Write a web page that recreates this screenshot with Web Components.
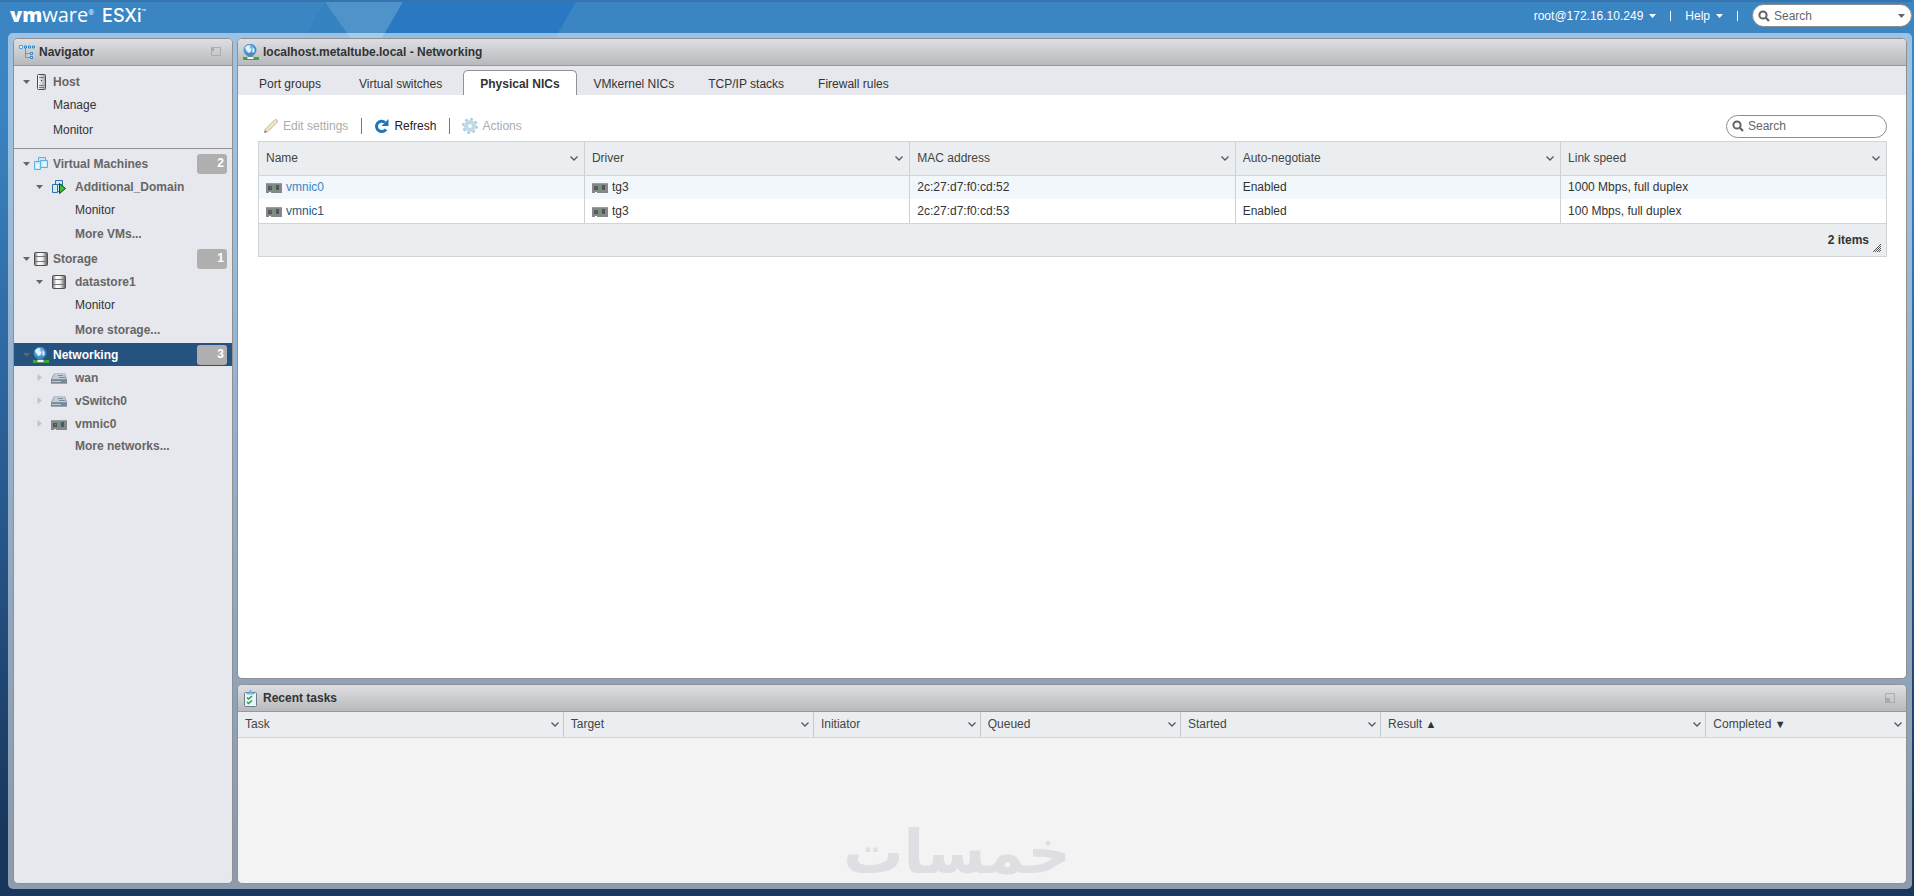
<!DOCTYPE html>
<html lang="en">
<head>
<meta charset="utf-8">
<title>localhost.metaltube.local - VMware ESXi</title>
<style>
  html, body { height: 100%; }
  body { margin: 0; font: 12px/16px "Liberation Sans", Arial, sans-serif; color: #333; }
</style>
</head>
<body>
<esx-app></esx-app>

<script>
const ICONS = {
  tree: `<svg width="16" height="16"><path d="M6.500 4v9.500h5M6.500 9.500h5" fill="none" stroke="#8a8f96"/><g fill="#eaf5fd" stroke="#2e84c8"><path d="M.5 1.500h3v3h-3z" stroke="#4aa5dc"/><path d="M5.500 2h2v2h-2zM9.500 2h2v2h-2zM13.500 2h2v2h-2zM11.500 8.500h2v2h-2zM11.500 12.500h2v2h-2z"/></g></svg>`,
  host: `<svg width="16" height="16"><defs><linearGradient id="a"><stop stop-color="#fff"/><stop offset="1" stop-color="#a5a5a8"/></linearGradient></defs><rect x="4.500" y=".5" width="8" height="15" rx="1" fill="url(#a)" stroke="#4a4a4c"/><path d="M6 3.500h5M6 11.500h5M6 13.500h5" stroke="#777"/><path d="M8 6h1v1H8z" fill="#333"/></svg>`,
  vms: `<svg width="16" height="16"><g fill="#c9e9fb" stroke="#5fb0e2"><path d="M5.500 1.500h7v7h-7z"/><path d="M1.500 5.500h6v8h-6z"/><path d="M7.500 4.500h7v7h-7z"/></g><path d="M3 8h3v4H3zM10 6h3v4h-3z" fill="#e9f7ff"/></svg>`,
  vmOn: `<svg width="16" height="16"><g fill="#d5e9f5" stroke="#2b72a8"><path d="M4.500 1.500h7v7h-7z"/><path d="M1.500 5.500h5v8h-5z"/><path d="M6.500 5.500h4v7h-4z"/></g><path d="M8.500 4.500l6 5-6 5z" fill="#3bc22f" stroke="#17431a"/></svg>`,
  disk: `<svg width="16" height="16"><defs><linearGradient id="a"><stop stop-color="#6d6d70"/><stop offset=".3" stop-color="#fff"/><stop offset=".6" stop-color="#eee"/><stop offset="1" stop-color="#555"/></linearGradient></defs><rect x="1.500" y="1.500" width="13" height="13" rx="1" fill="url(#a)" stroke="#505054"/><path d="M2 5.500h12M2 10.500h12" stroke="#77777b"/></svg>`,
  net: `<svg width="16" height="16"><defs><radialGradient id="a" cx=".4" cy=".35"><stop stop-color="#a9d8f6"/><stop offset="1" stop-color="#3b8bd0"/></radialGradient></defs><circle cx="7" cy="6" r="6" fill="url(#a)" stroke="#3f86c4" stroke-width=".8"/><path d="M2 4c1-2 3-3 5-2.500L6.500 4l2 1-1 3-2 1-1.500-2zM9.500 3l2 2v3l-2 1V6z" fill="#e2f4fd"/><path d="M0 13h16v3H0z" fill="#30b32c"/><path d="M4 13.500l1-1h5l1 1v2H4z" fill="#f2f2f2" stroke="#555" stroke-width=".6"/></svg>`,
  sw: `<svg width="16" height="16"><path d="M3 3.500h11L16 9v4.500H0V9z" fill="#8d9cab"/><path d="M3.500 4h10L15 9H1z" fill="#c0ccd8"/><path d="M0 9.500h16v4H0z" fill="#7b8896"/><path d="M7 5.500h5M8 7.500h6" stroke="#7b8c9d"/><path d="M1 11.500h9" stroke="#b9c7d3"/></svg>`,
  nic: `<svg width="16" height="16"><path d="M0 4h16v10H5v-1H3v1H0z" fill="#85878a"/><path d="M0 4h16v1H0z" fill="#9b9da0"/><path d="M2 7h4v4H2zM10 6h3v5h-3z" fill="#53575c"/><path d="M7 6h1v1H7zM8 9h1v1H8zM7 11h1v1H7zM14 6h1v1h-1zM14 10h1v1h-1zM4 8h1v1H4z" fill="#37c237"/><path d="M11 7h1v3h-1z" fill="#3b4f90"/></svg>`,
  tasks: `<svg width="16" height="17"><rect x="1.500" y="2.500" width="12" height="14" rx="1" fill="#e4f5fb" stroke="#6c7d90"/><path d="M4 4V2.500h2.500L7.500 0l1 2.500H11V4z" fill="#8fc4ea" stroke="#4d94cf" stroke-width=".6"/><path d="M4 7.500l1.500 1.500L9 6M4 12l1.500 1.500L9 10.500" fill="none" stroke="#2ea02e" stroke-width="1.500"/></svg>`,
  pencil: `<svg width="16" height="16"><path d="M1.500 14.500l1-3.500L12 1.500l2 .5.500 2L5 13.500z" fill="#f1e2c0" stroke="#c5baa4"/><path d="M1 15l1-3 2 2z" fill="#8c8c8c"/></svg>`,
  refresh: `<svg width="16" height="16"><path d="M12 11.300A5.200 5.200 0 1 1 11 4.300" fill="none" stroke="#2076bd" stroke-width="3"/><path d="M14.500 1v7H7.500z" fill="#2076bd"/></svg>`,
  gear: `<svg width="16" height="16"><circle cx="8" cy="8" r="6.800" fill="none" stroke="#a9c8d9" stroke-width="2.200" stroke-dasharray="2.700 2.640"/><circle cx="8" cy="8" r="4.300" fill="#fff" stroke="#bcdcec" stroke-width="3.600"/><circle cx="8" cy="8" r="2.500" fill="none" stroke="#c9cdd2"/></svg>`,
  search: `<svg width="12" height="12"><circle cx="5" cy="5" r="3.600" fill="none" stroke="#616469" stroke-width="2"/><path d="M7.800 7.800l3.200 3.200" stroke="#616469" stroke-width="2.200"/></svg>`,
  down: `<svg width="7" height="4"><path d="M0 0h7L3.500 4z" fill="currentColor"/></svg>`,
  right: `<svg width="7" height="7"><path d="M1.500 0v7L6 3.500z" fill="#c3c4c8"/></svg>`,
  chevron: `<svg width="8" height="5"><path d="M.5.5L4 4 7.500.5" fill="none" stroke="#55585c" stroke-width="1.300"/></svg>`,
  dockTop: `<svg width="10" height="10"><path d="M.5.500h9v8h-9z" fill="none" stroke="#aaabad"/><path d="M1 1h2v3H1z" fill="#aaabad"/></svg>`,
  dockBottom: `<svg width="10" height="10"><path d="M.5.500h9v9h-9z" fill="none" stroke="#aaabad"/><path d="M1 5h4v4H1z" fill="#aaabad"/></svg>`,
  grip: `<svg width="8" height="8"><path d="M0 8L8 0M2 8l6-6M4 8l4-4M6 8l2-2" stroke="#444" stroke-width=".9"/></svg>`
};

function define(name, css, html, setup) {
  const t = document.createElement("template");
  t.innerHTML = `<style>*{box-sizing:border-box}${css}</style>${html}`;
  customElements.define(name, class extends HTMLElement {
    connectedCallback() {
      if (this.shadowRoot) return;
      const root = this.attachShadow({ mode: "open" });
      root.append(t.content.cloneNode(true));
      if (setup) setup(this, root);
    }
  });
}

define("esx-icon", `:host{display:inline-flex;flex:none}svg{display:block}`, ``, (el, root) => {
  root.append(document.createRange().createContextualFragment(ICONS[el.getAttribute("name")]));
});

define("esx-search", `
  :host{display:block}
  label{display:flex;align-items:center;gap:4px;height:23px;padding:0 6px 0 5px;background:#fff;border:1px solid #8c8c8c;border-radius:12px;color:#666}
  input{flex:1;min-width:0;border:0;outline:0;padding:0;background:none;font:inherit;color:#555}
  input::placeholder{color:#666;opacity:1}
`, `<label><esx-icon name="search"></esx-icon><input type="text" placeholder="Search" aria-label="Search"><slot></slot></label>`);

define("esx-topbar", `
  :host{display:flex;align-items:center;height:33px;padding:0 0 4px 10px;color:#fff;border-top:2px solid #3574ae}
  .logo{font-family:"Open Sans",sans-serif;font-size:20px;line-height:24px;white-space:nowrap;display:flex;align-items:baseline;gap:8px}
  .logo b{font-weight:800}
  .esx{font-family:Inter,sans-serif;font-size:18px;font-weight:500}
  sup{font-size:7px;line-height:0;vertical-align:7px}
  .right{margin-left:auto;display:flex;align-items:center}
  button{font:inherit;color:inherit;background:none;border:0;padding:0;display:flex;align-items:center;gap:6px}
  i{width:1px;height:10px;background:#fff;margin:0 14px}
  esx-search{width:160px}
  .drop{color:#616469}
`, `<div class="logo"><span><b>vm</b>ware<sup>®</sup></span><span class="esx">ESXi<sup>™</sup></span></div>
<div class="right">
  <button>root@172.16.10.249 <esx-icon name="down"></esx-icon></button><i></i>
  <button>Help <esx-icon name="down"></esx-icon></button><i></i>
  <esx-search><esx-icon class="drop" name="down"></esx-icon></esx-search>
</div>`);

define("esx-panel", `
  :host{display:flex;flex-direction:column;min-width:0;min-height:0;border:1px solid #8f9093;border-radius:5px;overflow:hidden;background:#fff}
  header{display:flex;align-items:center;gap:4px;height:27px;flex:none;padding:0 11px 0 5px;background:linear-gradient(#dedfe2,#b8b9bc);border-bottom:1px solid #98999c}
  h2{font-size:12px;line-height:16px;margin:0;flex:1;color:#333}
`, `<header><slot name="icon"></slot><h2></h2><slot name="tool"></slot></header><slot></slot>`,
(el, root) => { root.querySelector("h2").textContent = el.getAttribute("heading"); });

define("esx-nav-item", `
  :host{display:flex;align-items:center;height:var(--h,23px);padding-left:7px;color:#666;font-weight:bold;flex:none}
  :host([level="2"]){padding-left:20px}
  :host([leaf]){padding-left:39px}
  :host([leaf="2"]){padding-left:61px}
  :host([plain]){font-weight:normal}
  :host([plain]) a{color:#333}
  :host([active]){background:#265280;color:#fff}
  .tw{width:11px;display:flex;justify-content:center;color:#666}
  .ic{margin:0 4px 0 1px;display:flex}
  :host([level="2"]) .ic{margin:0 8px 0 6px}
  a{color:inherit;text-decoration:none;flex:1;white-space:nowrap}
  b{width:30px;height:20px;margin-right:5px;padding-right:3px;border-radius:3px;background:#afafaf;color:#fff;line-height:19px;text-align:right}
`, `<a href="#"><slot></slot></a>`, (el, root) => {
  const a = root.querySelector("a"), icon = el.getAttribute("icon"), count = el.getAttribute("count");
  if (icon) a.insertAdjacentHTML("beforebegin", `<span class="tw"><esx-icon name="${el.hasAttribute("closed") ? "right" : "down"}"></esx-icon></span><span class="ic"><esx-icon name="${icon}"></esx-icon></span>`);
  if (count) a.insertAdjacentHTML("afterend", `<b>${count}</b>`);
});

define("esx-navigator", `
  :host{display:flex;min-height:0}
  esx-panel{flex:1;background:#e7e8ed}
  nav{display:flex;flex-direction:column;padding-top:4px}
  .t22{--h:22px}.t24{--h:24px}.t26{--h:26px}.t28{--h:28px}
  hr{width:100%;border:0;border-top:1px solid #8f9093;margin:4px 0 3px}
`, `<esx-panel heading="Navigator"><esx-icon slot="icon" name="tree"></esx-icon><esx-icon slot="tool" name="dockTop"></esx-icon>
<nav aria-label="Navigator">
  <esx-nav-item icon="host" class="t24">Host</esx-nav-item>
  <esx-nav-item leaf plain class="t22">Manage</esx-nav-item>
  <esx-nav-item leaf plain class="t28">Monitor</esx-nav-item>
  <hr>
  <esx-nav-item icon="vms" count="2">Virtual Machines</esx-nav-item>
  <esx-nav-item icon="vmOn" level="2">Additional_Domain</esx-nav-item>
  <esx-nav-item leaf="2" plain>Monitor</esx-nav-item>
  <esx-nav-item leaf="2" class="t26">More VMs...</esx-nav-item>
  <esx-nav-item icon="disk" count="1" class="t24">Storage</esx-nav-item>
  <esx-nav-item icon="disk" level="2" class="t22">datastore1</esx-nav-item>
  <esx-nav-item leaf="2" plain class="t24">Monitor</esx-nav-item>
  <esx-nav-item leaf="2" class="t26">More storage...</esx-nav-item>
  <esx-nav-item icon="net" count="3" active>Networking</esx-nav-item>
  <esx-nav-item icon="sw" level="2" closed>wan</esx-nav-item>
  <esx-nav-item icon="sw" level="2" closed>vSwitch0</esx-nav-item>
  <esx-nav-item icon="nic" level="2" closed>vmnic0</esx-nav-item>
  <esx-nav-item leaf="2" class="t22">More networks...</esx-nav-item>
</nav></esx-panel>`);

define("esx-tabs", `
  :host{display:flex;height:29px;flex:none;padding:4px 4px 0;background:#e7e8ed}
  button{font:inherit;color:#333;background:none;border:1px solid transparent;border-bottom:0;padding:2px 16px 0;border-radius:5px 5px 0 0;white-space:nowrap}
  button:has(~ [aria-selected=true]){margin-right:4px}
  button[aria-selected=true]{font-weight:bold;background:#fff;border-color:#8f9093}
`, ``, (el, root) => {
  el.setAttribute("role", "tablist");
  for (const [i, t] of ["Port groups", "Virtual switches", "Physical NICs", "VMkernel NICs", "TCP/IP stacks", "Firewall rules"].entries()) {
    const b = document.createElement("button");
    b.setAttribute("role", "tab"); b.setAttribute("aria-selected", i === 2); b.textContent = t;
    root.append(b);
  }
});

define("esx-toolbar", `
  :host{display:flex;align-items:center;height:24px}
  button{font:inherit;color:#222;background:none;border:0;padding:0;display:flex;align-items:center;gap:4px}
  button:disabled{color:#acacac}
  i{width:1px;height:16px;background:#777;margin:0 12px 0 13px}
  esx-search{width:161px;margin-left:auto}
`, `<button disabled><esx-icon name="pencil"></esx-icon>Edit settings</button><i></i>
<button><esx-icon name="refresh"></esx-icon>Refresh</button><i></i>
<button disabled><esx-icon name="gear"></esx-icon>Actions</button><esx-search></esx-search>`);

const TABLE = `
  table{width:100%;table-layout:fixed;border-collapse:collapse;text-align:left}
  th{font-weight:normal;color:#444;background:#eaeef1}
  .h{display:flex;align-items:center;justify-content:space-between}
`;

define("esx-nic-grid", TABLE + `
  :host{display:block;border:1px solid #d2d5d7}
  th,td{padding:0 6px 0 7px;border-left:1px solid #cdd1d4}
  th:first-child,td:first-child{border-left:0}
  th{height:33px;border-bottom:1px solid #d2d5d7}
  td{height:24px}
  tbody tr:first-child{background:#f2f7fb}
  .c{display:flex;align-items:center;gap:4px}
  a{color:#24597f;text-decoration:none}
  tbody tr:first-child a{color:#3a87c0}
  footer{display:flex;align-items:center;justify-content:flex-end;gap:4px;height:33px;padding-right:5px;background:#eaeef1;border-top:1px solid #d2d5d7;font-weight:bold}
  footer esx-icon{align-self:flex-end;margin-bottom:4px}
`, `<table><thead><tr></tr></thead><tbody></tbody></table><footer><span>2 items</span><esx-icon name="grip"></esx-icon></footer>`, (el, root) => {
  root.querySelector("thead tr").innerHTML = ["Name", "Driver", "MAC address", "Auto-negotiate", "Link speed"]
    .map(t => `<th scope="col"><div class="h">${t}<esx-icon name="chevron"></esx-icon></div></th>`).join("");
  root.querySelector("tbody").innerHTML = [["vmnic0", "2c:27:d7:f0:cd:52", "1000 Mbps, full duplex"], ["vmnic1", "2c:27:d7:f0:cd:53", "100 Mbps, full duplex"]]
    .map(([n, m, s]) => `<tr><td><div class="c"><esx-icon name="nic"></esx-icon><a href="#">${n}</a></div></td><td><div class="c"><esx-icon name="nic"></esx-icon>tg3</div></td><td>${m}</td><td>Enabled</td><td>${s}</td></tr>`).join("");
});

define("esx-networking", `
  :host{display:flex;min-height:0;min-width:0}
  esx-panel{flex:1}
  .body{padding:19px 19px 0 20px;display:flex;flex-direction:column;gap:3px}
  esx-toolbar{padding-left:5px}
`, `<esx-panel heading="localhost.metaltube.local - Networking"><esx-icon slot="icon" name="net"></esx-icon>
<esx-tabs></esx-tabs><div class="body"><esx-toolbar></esx-toolbar><esx-nic-grid></esx-nic-grid></div></esx-panel>`);

define("esx-tasks", TABLE + `
  :host{display:flex;min-height:0;min-width:0}
  esx-panel{flex:1;background:#f3f3f3}
  th{height:25px;padding:0 4px 0 7px;border-bottom:1px solid #d2d5d7;border-left:1px solid #c6cacd}
  th:first-child{border-left:0}
  small{font-size:11px;line-height:12px;color:#333}
`, `<esx-panel heading="Recent tasks"><esx-icon slot="icon" name="tasks"></esx-icon><esx-icon slot="tool" name="dockBottom"></esx-icon>
<table><colgroup></colgroup><thead><tr></tr></thead></table></esx-panel>`, (el, root) => {
  const cols = [["Task", 19.5], ["Target", 15], ["Initiator", 10], ["Queued", 12], ["Started", 12], ["Result <small>▲</small>", 19.5], ["Completed <small>▼</small>", 12]];
  root.querySelector("colgroup").innerHTML = cols.map(c => `<col style="width:${c[1]}%">`).join("");
  root.querySelector("tr").innerHTML = cols.map(c => `<th scope="col"><div class="h"><span>${c[0]}</span><esx-icon name="chevron"></esx-icon></div></th>`).join("");
});

define("esx-app", `
  :host{box-sizing:border-box;display:flex;flex-direction:column;min-height:100%;padding:0 2px 7px 0;position:relative;isolation:isolate;
    background:linear-gradient(#3a86c3 0,#3a84c2 110px,#2c639c 400px,#19375d 830px)}
  .beams{position:absolute;z-index:-1;top:2px;left:0;width:620px;height:120px;pointer-events:none}
  main{flex:1;margin-left:8px;padding:5px;display:grid;grid-template-columns:220px minmax(0,1fr);grid-template-rows:minmax(0,641fr) minmax(0,200fr);gap:5px 4px;border-radius:5px;background:rgba(255,255,255,.5)}
  esx-navigator{grid-row:1/3}
  .mark{position:absolute;left:0;right:0;bottom:12px;text-align:center;color:#dedfe2;font:bold 60px/64px "DejaVu Sans",sans-serif;pointer-events:none}
`, `<svg class="beams"><path d="M325 0h78l-35 60z" fill="#6fabd8" opacity=".4"/><path d="M403 0h173l-70 120H333z" fill="#2a78c2"/><path d="M325 0l40 60H290z" fill="#2f7dbf" opacity=".4"/></svg>
<esx-topbar></esx-topbar>
<main><esx-navigator></esx-navigator><esx-networking></esx-networking><esx-tasks></esx-tasks></main>
<div class="mark" lang="ar" dir="rtl">خمسات</div>`);
</script>
</body>
</html>
